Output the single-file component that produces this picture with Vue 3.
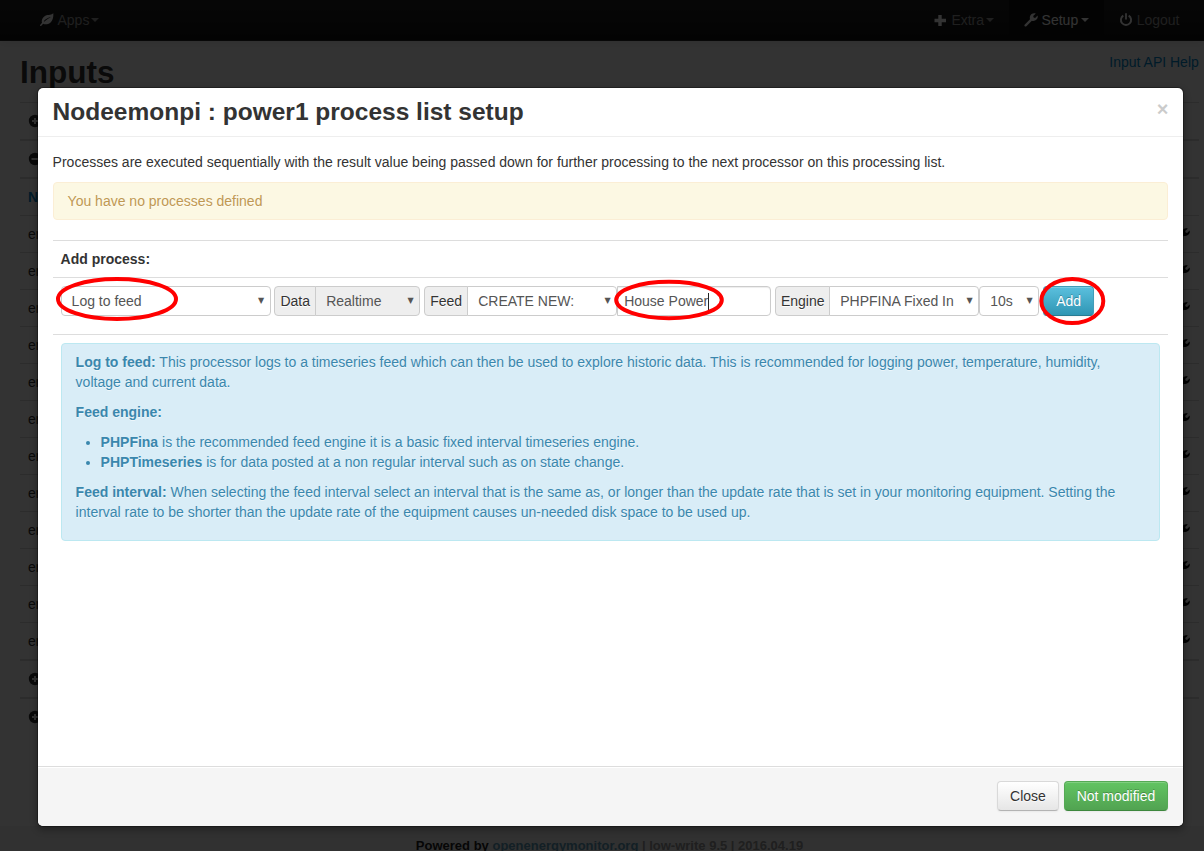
<script setup>
const rows = Array.from({ length: 12 }, (_, i) => i)
const wrench = 'M.6 11.7 6 6.3C5.4 4 6.1 2 7.6 1 8.9.1 10.500 0 11.800.500L9.200 3 9.600 4.600 11.100 4.900 13.600 2.400C14 3.900 13.600 5.500 12.500 6.600 11.300 7.800 9.500 8.200 7.900 7.700L2.400 13.200C1.900 13.700 1.200 13.600.8 13.200.4 12.800.2 12.100.6 11.700Z'
</script>

<template>
  <div class="page">
    <nav class="navbar">
      <a class="nav-item">
        <svg class="icon" viewBox="0 0 14 14"><path fill="#fff" fill-rule="evenodd" d="M13.300.3C13.700 5 12 9.600 8 10.900 6 11.500 4.300 11.200 3.200 10.700 2.500 11.300 1.700 12.500 1 13 .2 13.200-.2 12.500.3 11.800.8 11 1.600 10.400 2 9.800 1.300 7.600 2.100 5.100 4.300 3.400 7 1.400 10.600 2.600 13.300.3ZM10.200 4.300C7.800 4.800 5.300 6.200 3.800 8.300 4.200 8.600 4.500 8.600 4.800 8.300 6.300 6.500 8.200 5.400 10.400 4.700Z"/></svg>
        <span>Apps</span><b class="caret"></b>
      </a>
      <div class="nav-right">
        <a class="nav-item extra">
          <svg class="icon" viewBox="0 0 14 14"><path fill="#fff" d="M5.300 2h3.400v3.800H13v3.400H8.700V13H5.300V9.200H1.500V5.800h3.800z"/></svg>
          <span>Extra</span><b class="caret"></b>
        </a>
        <a class="nav-item active">
          <svg class="icon" viewBox="0 0 14 14"><path fill="#fff" :d="wrench"/></svg>
          <span>Setup</span><b class="caret"></b>
        </a>
        <a class="nav-item">
          <svg class="icon" viewBox="0 0 14 14"><path fill="none" stroke="#fff" stroke-width="1.900" d="M4.300 2.600a5.100 5.100 0 1 0 5.400 0"/><path fill="#fff" d="M6.100.3h1.800v6.200H6.100z"/></svg>
          <span>Logout</span>
        </a>
      </div>
    </nav>

    <main class="content">
      <div class="heading"><h2>Inputs</h2><a class="help">Input API Help</a></div>
      <div class="inputs">
        <div class="row"><svg class="icon" viewBox="0 0 14 14"><circle cx="7" cy="7" r="6.200" fill="#333"/><path fill="#fff" d="M6 4h2v2h2v2H8v2H6V8H4V6h2z"/></svg></div>
        <div class="row group"><svg class="icon" viewBox="0 0 14 14"><circle cx="7" cy="7" r="6.200" fill="#333"/><path fill="#fff" d="M3.500 6h7v2h-7z"/></svg></div>
        <div class="row group names"><b>Node</b></div>
        <div v-for="r in rows" :key="r" class="row">
          <span>emonpi</span>
          <svg class="icon tool" viewBox="0 0 14 14"><path fill="#000" :d="wrench"/></svg>
        </div>
        <div v-for="r in 2" :key="'g' + r" class="row group"><svg class="icon" viewBox="0 0 14 14"><circle cx="7" cy="7" r="6.200" fill="#333"/><path fill="#fff" d="M6 4h2v2h2v2H8v2H6V8H4V6h2z"/></svg></div>
      </div>
    </main>
    <footer class="page-footer"><span class="dark">Powered by</span> <a>openenergymonitor.org</a> | low-write 9.5 | 2016.04.19</footer>

    <div class="backdrop"></div>

    <section class="modal">
      <header class="modal-header"><h3>Nodeemonpi : power1 process list setup</h3><button class="close">×</button></header>
      <div class="modal-body">
        <p>Processes are executed sequentially with the result value being passed down for further processing to the next processor on this processing list.</p>
        <div class="alert warning">You have no processes defined</div>
        <div class="line label">Add process:</div>
        <div class="line form">
          <div class="field sel process">Log to feed<i>▼</i></div>
          <div class="group-input data"><span class="addon">Data</span><div class="field sel grey">Realtime<i>▼</i></div></div>
          <div class="group-input feed"><span class="addon">Feed</span><div class="field sel newfeed">CREATE NEW:<i>▼</i></div><div class="field text">House Power<u></u></div></div>
          <div class="group-input engine"><span class="addon">Engine</span><div class="field sel type">PHPFINA Fixed In<i>▼</i></div><div class="field sel interval">10s<i>▼</i></div></div>
          <button class="btn info-btn">Add</button>
        </div>
        <div class="line details">
          <div class="alert info">
            <p><b>Log to feed:</b> This processor logs to a timeseries feed which can then be used to explore historic data. This is recommended for logging power, temperature, humidity, voltage and current data.</p>
            <p><b>Feed engine:</b></p>
            <ul>
              <li><b>PHPFina</b> is the recommended feed engine it is a basic fixed interval timeseries engine.</li>
              <li><b>PHPTimeseries</b> is for data posted at a non regular interval such as on state change.</li>
            </ul>
            <p><b>Feed interval:</b> When selecting the feed interval select an interval that is the same as, or longer than the update rate that is set in your monitoring equipment. Setting the interval rate to be shorter than the update rate of the equipment causes un-needed disk space to be used up.</p>
          </div>
        </div>
      </div>
      <footer class="modal-footer"><button class="btn cancel">Close</button><button class="btn success">Not modified</button></footer>
    </section>

    <svg class="marks" viewBox="0 0 1204 851">
      <ellipse cx="117" cy="299" rx="59" ry="20"/>
      <ellipse cx="669" cy="300" rx="52.800" ry="18.200"/>
      <ellipse cx="1072.300" cy="301" rx="31" ry="22"/>
    </svg>
  </div>
</template>

<style>
body { margin: 0; background: #fff; }
</style>

<style scoped>
* { box-sizing: border-box; }
.page { position: relative; width: 1204px; height: 851px; overflow: hidden; font: 14px/20px "Liberation Sans", Arial, sans-serif; color: #333; background: #fff; }
p { margin: 0 0 10px; }
.icon { width: 14px; height: 14px; flex: none; display: block; }

.navbar { display: flex; justify-content: space-between; height: 41px; padding: 0 9.500px 0 25px; background: linear-gradient(#222, #111); border-bottom: 1px solid #252525; box-shadow: 0 1px 10px rgba(0, 0, 0, .1); }
.nav-right { display: flex; }
.nav-item { display: flex; align-items: center; height: 40px; padding: 0 15px; color: #999; }
.nav-item span { margin-left: 3.500px; }
.nav-item.active { color: #fff; background: #111; box-shadow: inset 0 3px 8px rgba(0, 0, 0, .125); }
.caret { margin: 0 0 0 2px; border: 4px solid transparent; border-top-color: currentColor; border-bottom: 0; }
.nav-item.active .caret { margin-left: 3px; }
.extra .icon { margin-right: .5px; }

.content { padding: 11px 5px 0 20px; height: 785px; }
.heading { display: flex; justify-content: space-between; height: 50px; }
h2 { margin: 0; font-size: 31.500px; line-height: 40px; }
.help { color: #08c; margin-right: .2px; }
.inputs { display: flex; flex-direction: column; }
.row { display: flex; justify-content: space-between; align-items: flex-start; height: 37px; padding: 8px; border-top: 1px solid #ddd; }
.row.group { height: 38px; border-top-width: 2px; }
.row .icon { margin-top: 3px; }
.row .tool { margin: 4px 1px 0 0; }
.names { color: #08c; }
.page-footer { height: 25px; padding-top: 10px; text-align: center; font-size: 13px; line-height: 20px; font-weight: bold; color: #999; background: #f5f5f5; white-space: nowrap; padding-left: 15px; }
.page-footer .dark { color: #222; }
.page-footer a { color: #5e9db9; }

.backdrop { position: absolute; inset: 0; background: rgba(0, 0, 0, .8); }

.modal { position: absolute; left: 36.600px; top: 87px; width: 1147.400px; height: 740px; display: flex; flex-direction: column; background: #fff; background-clip: padding-box; border: 1px solid rgba(0, 0, 0, .3); border-radius: 6px; box-shadow: 0 3px 7px rgba(0, 0, 0, .3); overflow: hidden; }
.modal-header { display: flex; justify-content: space-between; height: 49px; padding: 9px 15px; border-bottom: 1px solid #eee; }
h3 { margin: 0; font-size: 24.500px; line-height: 30px; }
.close { height: 20px; margin: 2px -.5px 0 0; padding: 0; border: 0; background: none; font: bold 20px/20px "Liberation Sans", Arial, sans-serif; color: #000; opacity: .2; }
.modal-body { flex: 1; padding: 15px; }
.alert { padding: 8px 35px 8px 14px; border: 1px solid; border-radius: 4px; text-shadow: 0 1px 0 rgba(255, 255, 255, .5); }
.alert.warning { height: 38px; margin-bottom: 20px; color: #c09853; background: #fcf8e3; border-color: #fbeed5; }
.alert.info { height: 198px; color: #3a87ad; background: #d9edf7; border-color: #bce8f1; }
ul { margin: 0 0 10px 25px; padding: 0; }
.line { border-top: 1px solid #ddd; padding: 8px; }
.label { height: 37px; font-weight: bold; }
.form { display: flex; height: 57px; }
.field { height: 30px; border: 1px solid #ccc; border-radius: 4px; background: #fff; color: #555; padding: 4px 10px; white-space: nowrap; display: flex; justify-content: space-between; align-items: center; }
.sel i { font: normal 8px/10px "DejaVu Sans", sans-serif; margin: 0 -4.500px 1px 0; }
.group-input { display: flex; margin-left: 4px; }
.addon { height: 30px; border: 1px solid #ccc; border-radius: 4px 0 0 4px; background: #eee; line-height: 28px; text-align: center; margin-right: -1px; text-shadow: 0 1px 0 #fff; }
.addon + .field { border-top-left-radius: 0; border-bottom-left-radius: 0; }
.process { width: 210px; }
.data { margin-left: 3.600px; }
.data .addon { width: 42px; }
.grey { width: 105px; background: #eee; }
.feed .addon { width: 44px; }
.newfeed { width: 150px; }
.text { width: 154px; padding: 4px 6px; justify-content: flex-start; border-radius: 0 4px 4px 0; box-shadow: inset 0 1px 1px rgba(0, 0, 0, .075); }
.text u { width: 1px; height: 17px; background: #222; }
.engine .addon { width: 55px; }
.type { width: 150px; }
.interval { width: 60px; }
.btn { height: 30px; padding: 4px 0; border: 1px solid #ccc; border-color: #d9d9d9 #d9d9d9 #b3b3b3; border-radius: 4px; font: 14px/20px "Liberation Sans", Arial, sans-serif; color: #333; text-shadow: 0 1px 1px rgba(255, 255, 255, .75); background: linear-gradient(#fff, #e6e6e6); box-shadow: inset 0 1px 0 rgba(255, 255, 255, .2), 0 1px 2px rgba(0, 0, 0, .05); }
.info-btn { width: 51px; margin-left: 4px; color: #fff; text-shadow: 0 -1px 0 rgba(0, 0, 0, .25); background: linear-gradient(#5bc0de, #2f96b4); border-color: #429db8 #429db8 #287b92; }
.cancel { width: 62px; }
.success { width: 104px; color: #fff; text-shadow: 0 -1px 0 rgba(0, 0, 0, .25); background: linear-gradient(#62c462, #51a351); border-color: #55a955 #55a955 #3d873d; }
.modal-footer { display: flex; justify-content: flex-end; gap: 5px; height: 60px; padding: 14px 15px 15px; border-top: 1px solid #ddd; background: #f5f5f5; box-shadow: inset 0 1px 0 #fff; }

.marks { position: absolute; inset: 0; width: 1204px; height: 851px; pointer-events: none; }
.marks ellipse { fill: none; stroke: #f00; stroke-width: 4; }
</style>
